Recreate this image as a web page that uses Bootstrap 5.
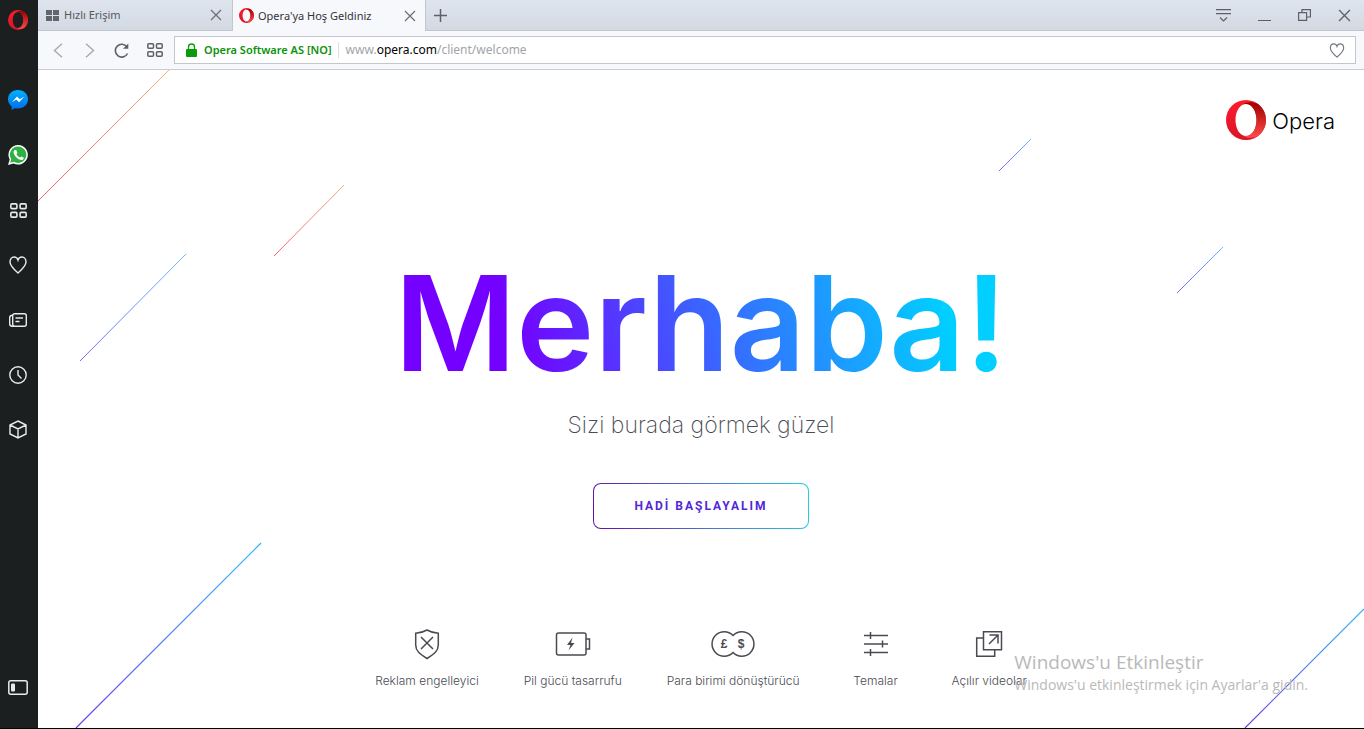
<!DOCTYPE html>
<html lang="tr">
<head>
<meta charset="utf-8">
<meta name="viewport" content="width=device-width, initial-scale=1">
<title>Opera'ya Hoş Geldiniz</title>
<link href="https://cdn.jsdelivr.net/npm/bootstrap@5.3.0/dist/css/bootstrap.min.css" rel="stylesheet">
<style>
  body { font-family: "Noto Sans", sans-serif; font-size: 12px; line-height: 16px; background: #fff; color: #4a4b52; }
  button { background: none; border: 0; padding: 0; color: inherit; }
  svg { display: block; flex: none; }
  .app-frame { border-bottom: 1px solid #000; }
  .side-rail { width: 38px; background: #1b1f20; color: #e8eaeb; padding: 9px 0 30px; }
  .side-rail button { width: 36px; height: 22px; display: flex; align-items: center; justify-content: center; }
  .rail-group { margin-top: 58px; gap: 33px; }

  .tab-strip { height: 31px; background: linear-gradient(#dfe5ee, #d3d9e3); border-bottom: 1px solid #c3c7cd; }
  .tab-item { width: 194px; padding: 0 10px 0 8px; gap: 5px; color: #55585e; }
  .tab-item a { color: inherit; text-decoration: none; font-size: 11px; }
  .tab-item button { color: #6a6d72; }
  .tab-open { background: #f7f8fb; border: 1px solid #c3c7cd; border-width: 0 1px; margin-bottom: -1px; padding-left: 6px; padding-right: 9px; gap: 4px; color: #33353a; }
  .window-tools { gap: 27px; padding-right: 13px; color: #5d6167; }

  .tool-bar { height: 39px; background: #f7f8fb; border-bottom: 1px solid #c9ccd1; padding: 0 8px 0 14px; }
  .nav-tools { gap: 17px; width: 122px; color: #5d6167; }
  .nav-tools .dim { color: #a9acb2; }
  .address { height: 28px; background: #fff; border: 1px solid #c3c7cd; padding: 0 10px 0 11px; }
  .address button { color: #75787d; }
  .owner { color: #0a930a; font-weight: 600; font-size: 11px; margin-left: 7px; padding-right: 6px; border-right: 1px solid #dcdee2; }
  .url { color: #a2a4a8; margin-left: 7px; text-decoration: none; }
  .url b { color: #000; font-weight: 400; }

  .welcome { overflow: hidden; }
  .streaks { position: absolute; top: 0; pointer-events: none; }
  .brand { padding: 30px 29px 0 0; gap: 6px; color: #000; font: 300 22px/40px Inter, sans-serif; text-decoration: none; }
  .brand span { padding-top: 2px; line-height: 38px; }
  .brand:hover { color: #000; }
  .hello { font: 600 132px/156px Inter, sans-serif; margin: 105px 0 0; color: transparent;
    background: linear-gradient(75deg, #7400ff 20%, #3f5cff 48%, #00cfff 88%); -webkit-background-clip: text; background-clip: text; }
  .greeting { font: 200 23px/32px Inter, sans-serif; margin: 8px 0 0; color: #4a4b52; }
  .start { margin-top: 42px; width: 216px; height: 46px; border: 1px solid transparent; border-radius: 8px;
    background: linear-gradient(#fff, #fff) padding-box, linear-gradient(75deg, #6410a8, #4f6fd0 50%, #22d0e0) border-box;
    color: #5228d8; font: 700 12px/16px Roboto, sans-serif; letter-spacing: 2px; }
  .features { margin-top: 99px; gap: 45px; font: 300 12px/16px Inter, sans-serif; }
  .features li { min-width: 62px; gap: 13px; }
  .os-notice { position: absolute; right: 56px; bottom: 33px; color: #b9b9b9; }
  .os-notice h2 { font: 400 19px/26px "Open Sans", sans-serif; margin: 0; }
  .os-notice p { font: 400 14px/20px "Open Sans", sans-serif; margin: 0; }
</style>
</head>
<body>
<svg width="0" height="0" class="position-absolute" aria-hidden="true">
  <defs>
    <linearGradient id="ringL" x1="0" y1="0" x2="0" y2="1"><stop offset="0" stop-color="#ff1b2d"/><stop offset="1" stop-color="#d81526"/></linearGradient>
    <linearGradient id="ringR" x1="0" y1="0" x2="0" y2="1"><stop offset="0" stop-color="#9c0000"/><stop offset="1" stop-color="#ff4b4b"/></linearGradient>
    <symbol id="o-mark" viewBox="0 0 40 40">
      <path fill="url(#ringL)" fill-rule="evenodd" d="M20 0a20 20 0 1 0 0 40a20 20 0 1 0 0-40zM20 4c6 0 10.500 7 10.500 16S26 36 20 36S9.500 29 9.500 20S14 4 20 4z"/>
      <path fill="url(#ringR)" d="M17 4.500c3-3 10-3 15-.5a20 20 0 0 1 0 32c-5 2.500-12 2.500-15-.5c1 .4 2 .5 3 .5c6 0 10.500-7 10.500-16S26 4 20 4c-1 0-2 .1-3 .5z"/>
    </symbol>
    <symbol id="i-grid" viewBox="0 0 16 14"><g fill="none" stroke="currentColor" stroke-width="1.500"><rect x=".8" y=".8" width="5.700" height="4.400" rx="1"/><rect x="9.500" y=".8" width="5.700" height="4.400" rx="1"/><rect x=".8" y="8.800" width="5.700" height="4.400" rx="1"/><rect x="9.500" y="8.800" width="5.700" height="4.400" rx="1"/></g></symbol>
    <symbol id="i-heart" viewBox="0 0 18 18"><path fill="none" stroke="currentColor" stroke-width="1.400" d="M9 17C5 13.500 1 10 1 6C1 3 2.800 1 5 1C7 1 8.500 2.300 9 4C9.500 2.300 11 1 13 1C15.200 1 17 3 17 6C17 10 13 13.500 9 17z"/></symbol>
    <symbol id="i-cross" viewBox="0 0 12 12"><path stroke="currentColor" stroke-width="1.200" d="M1 1l10 10M11 1L1 11"/></symbol>
  </defs>
</svg>

<div class="app-frame d-flex min-vh-100">
  <nav class="side-rail d-flex flex-column flex-shrink-0" aria-label="Kenar çubuğu">
    <button aria-label="Opera"><svg width="20" height="20"><use href="#o-mark"/></svg></button>
    <div class="rail-group d-flex flex-column">
      <button aria-label="Messenger"><svg width="20" height="20" viewBox="0 0 20 20"><defs><linearGradient id="msg" x2="0" y2="1"><stop stop-color="#00b2ff"/><stop offset="1" stop-color="#006ae8"/></linearGradient></defs><path fill="url(#msg)" d="M10 0C4 0 0 4 0 9.300c0 3 1.300 5.500 3.600 7.200V20l3.300-1.800c1 .3 2 .4 3.100.4c6 0 10-4.200 10-9.300S16 0 10 0z"/><path fill="#fff" d="M3.800 12.200L9 6.600l2.700 2.700l4.600-2.700l-5.200 5.600l-2.700-2.800z"/></svg></button>
      <button aria-label="WhatsApp"><svg width="20" height="20" viewBox="0 0 20 20"><path fill="#fff" d="M10.200 0a9.800 9.800 0 0 0-8.500 14.600L0 20l5.500-1.500A9.800 9.800 0 1 0 10.200 0z"/><path fill="#2fb043" d="M10.200 1.500a8.200 8.200 0 0 0-7 12.600l-1 3.700l3.800-1A8.200 8.200 0 1 0 10.200 1.500z"/><path fill="#fff" d="M6.800 5c-1.400.8-1.600 2.300-.8 4c1.500 3.300 4 5.500 7 6c1.500.1 2.700-.8 2.800-2.300l-2.400-1.300l-1.300 1.200c-1.900-.8-3-2-3.700-3.500l1-1.200L8.300 5z"/></svg></button>
      <button aria-label="Hızlı Erişim"><svg width="17" height="15"><use href="#i-grid"/></svg></button>
      <button aria-label="Yer imleri"><svg width="18" height="18"><use href="#i-heart"/></svg></button>
      <button aria-label="Haberler"><svg width="18" height="14" viewBox="0 0 18 14" fill="none" stroke="currentColor" stroke-width="1.400"><rect x="3.700" y=".7" width="13.600" height="12.600" rx="2"/><path d="M3.700 2.200C1.500 2.200.7 2.800.7 4.500v6.300c0 1.700.8 2.500 2.500 2.500h2M6.500 5h7.500M6.500 8.500h4"/></svg></button>
      <button aria-label="Geçmiş"><svg width="18" height="18" viewBox="0 0 18 18" fill="none" stroke="currentColor" stroke-width="1.400"><circle cx="9" cy="9" r="8.200"/><path d="M9 4v5l3.500 3.500"/></svg></button>
      <button aria-label="Uzantılar"><svg width="18" height="20" viewBox="0 0 18 20" fill="none" stroke="currentColor" stroke-width="1.400"><path d="M9 1l8 4v9l-8 4l-8-4V5zM1 5l8 4l8-4M9 9v9"/></svg></button>
    </div>
    <button class="mt-auto" aria-label="Kenar çubuğu ayarı"><svg width="20" height="15" viewBox="0 0 20 15"><rect x=".8" y=".8" width="18.400" height="13.400" rx="2" fill="none" stroke="currentColor" stroke-width="1.500"/><rect x="3" y="3.500" width="4" height="8" rx="1" fill="currentColor"/></svg></button>
  </nav>

  <div class="d-flex flex-column flex-grow-1">
    <header>
      <div class="tab-strip d-flex">
        <div class="tab-item d-flex align-items-center">
          <svg width="13" height="11" viewBox="0 0 13 11" fill="#62656b"><rect width="6" height="5"/><rect x="7" width="6" height="5"/><rect y="6" width="6" height="5"/><rect x="7" y="6" width="6" height="5"/></svg>
          <a href="#">Hızlı Erişim</a>
          <button class="ms-auto" aria-label="Kapat"><svg width="12" height="12"><use href="#i-cross"/></svg></button>
        </div>
        <div class="tab-item tab-open d-flex align-items-center">
          <svg width="15" height="15"><use href="#o-mark"/></svg>
          <a href="#">Opera'ya Hoş Geldiniz</a>
          <button class="ms-auto" aria-label="Kapat"><svg width="12" height="12"><use href="#i-cross"/></svg></button>
        </div>
        <button class="ms-2" aria-label="Yeni sekme"><svg width="13" height="13" viewBox="0 0 13 13" stroke="#5d6167" stroke-width="1.500"><path d="M6.500 0v13M0 6.500h13"/></svg></button>
        <div class="window-tools d-flex align-items-center ms-auto">
          <button aria-label="Sekme menüsü"><svg width="15" height="13" viewBox="0 0 15 13" fill="none" stroke="currentColor" stroke-width="1.200"><path d="M0 .6h15M0 4.600h15M4 8.500l3.500 3.500L11 8.500"/></svg></button>
          <button aria-label="Küçült"><svg width="13" height="12" viewBox="0 0 13 12" stroke="currentColor"><path d="M0 11.500h13"/></svg></button>
          <button aria-label="Geri yükle"><svg width="13" height="12" viewBox="0 0 13 12" fill="none" stroke="currentColor" stroke-width="1.200"><path d="M.6 3.600h8v7.800h-8zM4 3.500V.6h8.400V8H9"/></svg></button>
          <button aria-label="Kapat"><svg width="13" height="13"><use href="#i-cross"/></svg></button>
        </div>
      </div>
      <div class="tool-bar d-flex align-items-center">
        <div class="nav-tools d-flex align-items-center">
          <button class="dim" aria-label="Geri"><svg width="12" height="15" viewBox="0 0 12 15" fill="none" stroke="currentColor" stroke-width="1.500"><path d="M10 .8L2.500 7.500L10 14.200"/></svg></button>
          <button class="dim" aria-label="İleri"><svg width="16" height="15" viewBox="0 0 16 15" fill="none" stroke="currentColor" stroke-width="1.500"><path d="M5 .8l7.500 6.700L5 14.200"/></svg></button>
          <button aria-label="Yenile"><svg width="16" height="15" viewBox="0 0 16 15" fill="none" stroke="currentColor" stroke-width="1.600"><path d="M13.500 10.500A6.400 6.400 0 1 1 13 4"/><path d="M14.300.5v5.200H9z" fill="currentColor" stroke="none"/></svg></button>
          <button aria-label="Hızlı Erişim"><svg width="16" height="14"><use href="#i-grid"/></svg></button>
        </div>
        <div class="address d-flex align-items-center flex-grow-1">
          <svg width="11" height="14" viewBox="0 0 11 14"><path d="M2.500 7V4a3 3 0 0 1 6 0v3" fill="none" stroke="#0a9a0a" stroke-width="1.300"/><rect y="6" width="11" height="8" rx="1" fill="#0a9a0a"/></svg>
          <span class="owner">Opera Software AS [NO]</span>
          <a class="url" href="#">www.<b>opera.com</b>/client/welcome</a>
          <button class="ms-auto" aria-label="Yer imi ekle"><svg width="16" height="15"><use href="#i-heart"/></svg></button>
        </div>
      </div>
    </header>

    <main class="welcome position-relative d-flex flex-column align-items-center flex-grow-1">
      <svg class="streaks start-0" width="320" height="658" fill="none" aria-hidden="true">
        <defs>
          <linearGradient id="warm" x1="0" y1="1" x2="1" y2="0"><stop stop-color="#f0606c"/><stop offset="1" stop-color="#fbae7c"/></linearGradient>
          <linearGradient id="cool" x1="0" y1="1" x2="1" y2="0"><stop stop-color="#7468f4"/><stop offset="1" stop-color="#62bcff"/></linearGradient>
          <linearGradient id="deep" x1="0" y1="1" x2="1" y2="0"><stop stop-color="#6a3ce4"/><stop offset=".5" stop-color="#4c7cf4"/><stop offset="1" stop-color="#28b4f4"/></linearGradient>
        </defs>
        <path stroke="url(#warm)" d="M0 131L131 0"/><path stroke="url(#warm)" d="M236 186l70-71"/>
        <path stroke="url(#cool)" d="M42 291L148 184"/><path stroke="url(#deep)" stroke-width="1.200" d="M38 658L223 473"/>
      </svg>
      <svg class="streaks end-0" width="380" height="658" fill="none" aria-hidden="true">
        <path stroke="url(#cool)" d="M15 101l32-32"/><path stroke="url(#cool)" d="M193 223l46-46"/>
        <path stroke="url(#deep)" stroke-width="1.200" d="M261 658l119-119"/>
      </svg>

      <a class="brand d-flex align-items-center align-self-end" href="#"><svg width="40" height="40"><use href="#o-mark"/></svg><span>Opera</span></a>
      <h1 class="hello">Merhaba!</h1>
      <p class="greeting">Sizi burada görmek güzel</p>
      <button class="start">HADİ BAŞLAYALIM</button>

      <ul class="features list-unstyled d-flex justify-content-center mb-0">
        <li class="d-flex flex-column align-items-center"><svg width="30" height="32" viewBox="0 0 30 32" fill="none" stroke="currentColor" stroke-width="1.500"><path d="M15 2c3.500 2 7 3 11.300 3.300V17c0 6-4 9-11.300 13.500C7.700 26 3.700 23 3.700 17V5.300C8 5 11.500 4 15 2zM9 9l12 12M21 9L9 21"/></svg>Reklam engelleyici</li>
        <li class="d-flex flex-column align-items-center"><svg width="36" height="32" viewBox="0 0 36 32" fill="none" stroke="currentColor" stroke-width="1.500"><rect x="1.500" y="5" width="29.500" height="22" rx="2"/><path d="M31 11h3.500v10H31"/><path d="M17.500 9.500L12 17h3.500l-2 5.500L19.500 15H16z" fill="currentColor" stroke="none"/></svg>Pil gücü tasarrufu</li>
        <li class="d-flex flex-column align-items-center"><svg width="44" height="32" viewBox="0 0 44 32" fill="none" stroke="currentColor" stroke-width="1.500"><path d="M22 7.500a12.200 12.200 0 1 0 0 17a12.200 12.200 0 1 0 0-17z"/><g fill="currentColor" stroke="none" font-family="Liberation Sans" font-weight="700" font-size="12" text-anchor="middle"><text x="13" y="20">£</text><text x="30" y="20">$</text></g></svg>Para birimi dönüştürücü</li>
        <li class="d-flex flex-column align-items-center"><svg width="26" height="32" viewBox="0 0 26 32" fill="none" stroke="currentColor" stroke-width="1.500"><path d="M1 7.500h24M1 16h24M1 24.500h24M7.500 4v7M19.500 12.500v7M7.500 21v7"/></svg>Temalar</li>
        <li class="d-flex flex-column align-items-center"><svg width="28" height="32" viewBox="0 0 28 32" fill="none" stroke="currentColor" stroke-width="1.500"><path d="M8.500 3.700h18v18h-18zM8.500 10H1.700v18.300h18V22M14.500 7H23v8.500M23 7l-9 9"/></svg>Açılır videolar</li>
      </ul>

      <aside class="os-notice">
        <h2>Windows'u Etkinleştir</h2>
        <p>Windows'u etkinleştirmek için Ayarlar'a gidin.</p>
      </aside>
    </main>
  </div>
</div>
<script src="https://cdn.jsdelivr.net/npm/bootstrap@5.3.0/dist/js/bootstrap.bundle.min.js"></script>
</body>
</html>
